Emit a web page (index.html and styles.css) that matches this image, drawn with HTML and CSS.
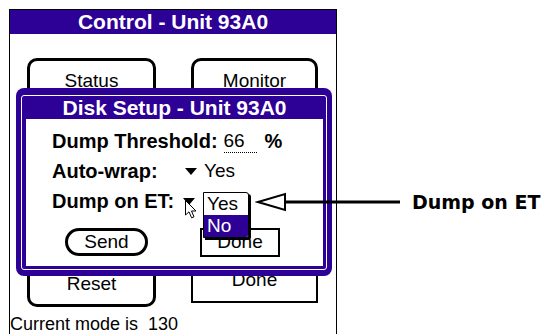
FILE: index.html
```html
<!DOCTYPE html>
<html lang="en">
<head>
  <meta charset="UTF-8">
  <title>Disk Setup</title>
  <link rel="stylesheet" href="styles.css">
</head>
<body>
  <div class="screen">
    <div class="titlebar">Control - Unit 93A0</div>
    <div class="buttons">
      <div class="btn round">Status</div>
      <div class="btn round">Monitor</div>
      <div class="btn round">Reset</div>
      <div class="btn square lifted">Done</div>
    </div>
    <div class="status">Current mode is&nbsp; 130</div>

    <div class="dialog">
      <div class="frame">
        <div class="dialog-title">Disk Setup - Unit 93A0</div>
        <div class="dialog-body">
          <div class="row">
            <span class="label">Dump Threshold:</span>
            <span class="field">66</span>
            <span class="unit">%</span>
          </div>
          <div class="row">
            <span class="label wrap-label">Auto-wrap:</span>
            <span class="trigger"></span>
            <span class="value">Yes</span>
          </div>
          <div class="row">
            <span class="label et-label">Dump on ET:</span>
            <span class="trigger"></span>
          </div>
          <div class="actions">
            <div class="btn pill">Send</div>
            <div class="btn rect">Done</div>
          </div>

          <div class="popup">
            <div class="opt">Yes</div>
            <div class="opt selected">No</div>
          </div>
          <svg class="cursor" width="12" height="19" viewBox="0 0 12 19">
            <path d="M0.5 0.5 L0.5 15 L4 11.8 L6.6 17.8 L9 16.8 L6.5 11 L11 11 Z" fill="#fff" stroke="#000" stroke-width="1"/>
          </svg>
        </div>
      </div>
    </div>
  </div>

  <div class="callout">
    <svg width="145" height="24" viewBox="0 0 145 24">
      <polygon points="3,12 30,4 30,20" fill="#fff" stroke="#000" stroke-width="2"/>
      <line x1="30" y1="12" x2="145" y2="12" stroke="#000" stroke-width="3"/>
    </svg>
    <span class="callout-text">Dump on ET</span>
  </div>
</body>
</html>
```

FILE: styles.css
```css
html, body {
  margin: 0;
  overflow: hidden;
  background: #fff;
}
body {
  position: relative;
  width: 548px;
  height: 334px;
  font-family: "Liberation Sans", Arial, sans-serif;
  color: #000;
}
.screen {
  position: relative;
  margin: 9px 0 0 9px;
  width: 326px;
  height: 324px;
  border: 1px solid #000;
  border-bottom: none;
}
.titlebar {
  height: 24px;
  line-height: 24px;
  background: #2d0096;
  color: #fff;
  font-weight: bold;
  font-size: 21px;
  text-align: center;
}
.buttons {
  display: grid;
  grid-template-columns: 129px 127px;
  grid-template-rows: 46px 46px;
  column-gap: 35px;
  row-gap: 157px;
  margin-top: 24px;
  padding-left: 17px;
}
.btn {
  box-sizing: border-box;
  display: flex;
  align-items: center;
  justify-content: center;
  font-size: 19px;
  background: #fff;
}
.round {
  border: 3px solid #000;
  border-radius: 10px;
}
.square {
  border: 2px solid #000;
}
.lifted {
  margin-top: -4px;
  height: 46px;
}
.status {
  margin-top: 7px;
  font-size: 18px;
  line-height: 20px;
}

/* dialog */
.dialog {
  position: absolute;
  left: 6px;
  top: 78px;
  box-sizing: border-box;
  width: 316px;
  height: 188px;
  padding: 7px 5px 6px;
  background: #2d0096;
  border-radius: 8px;
}
.frame {
  box-sizing: border-box;
  height: 175px;
  border: 1px solid #fff;
  border-radius: 3px;
  padding: 0 3px 3px 4px;
}
.dialog-title {
  height: 23px;
  line-height: 23px;
  color: #fff;
  font-weight: bold;
  font-size: 21px;
  text-align: center;
}
.dialog-body {
  position: relative;
  box-sizing: border-box;
  height: 147px;
  background: #fff;
  padding: 10px 0 0 26px;
}
.row {
  display: flex;
  align-items: center;
  height: 24px;
}
.row + .row {
  margin-top: 6px;
}
.label {
  font-weight: bold;
  font-size: 20px;
}
.wrap-label {
  width: 133px;
}
.et-label {
  width: 131px;
}
.field {
  box-sizing: border-box;
  width: 33px;
  height: 24px;
  line-height: 24px;
  margin-left: 6px;
  font-size: 19px;
  border-bottom: 1px dotted #000;
}
.unit {
  margin-left: 8px;
  font-weight: bold;
  font-size: 20px;
}
.trigger {
  width: 0;
  height: 0;
  border-left: 6px solid transparent;
  border-right: 6px solid transparent;
  border-top: 7px solid #000;
}
.value {
  margin-left: 7px;
  font-size: 19px;
}
.actions {
  display: flex;
  gap: 52px;
  margin-top: 15px;
  padding-left: 13px;
}
.pill {
  width: 83px;
  height: 28px;
  border: 3px solid #000;
  border-radius: 14px;
}
.rect {
  width: 80px;
  height: 29px;
  padding-bottom: 2px;
  border: 2px solid #000;
}
.popup {
  position: absolute;
  left: 177px;
  top: 73px;
  width: 44px;
  border: 1px solid #000;
  border-radius: 0 3px 3px 0;
  box-shadow: 2px 2px 0 #000;
  background: #fff;
  overflow: hidden;
}
.opt {
  height: 22px;
  line-height: 22px;
  padding-left: 3px;
  font-size: 19px;
}
.opt.selected {
  background: #2d0096;
  color: #fff;
}
.cursor {
  position: absolute;
  left: 159px;
  top: 81px;
}

/* annotation */
.callout {
  position: absolute;
  left: 255px;
  top: 190px;
  display: flex;
  align-items: center;
  gap: 12px;
}
.callout svg {
  display: block;
}
.callout-text {
  font-family: "DejaVu Sans", sans-serif;
  font-weight: bold;
  font-size: 19px;
  line-height: 22px;
}
```
